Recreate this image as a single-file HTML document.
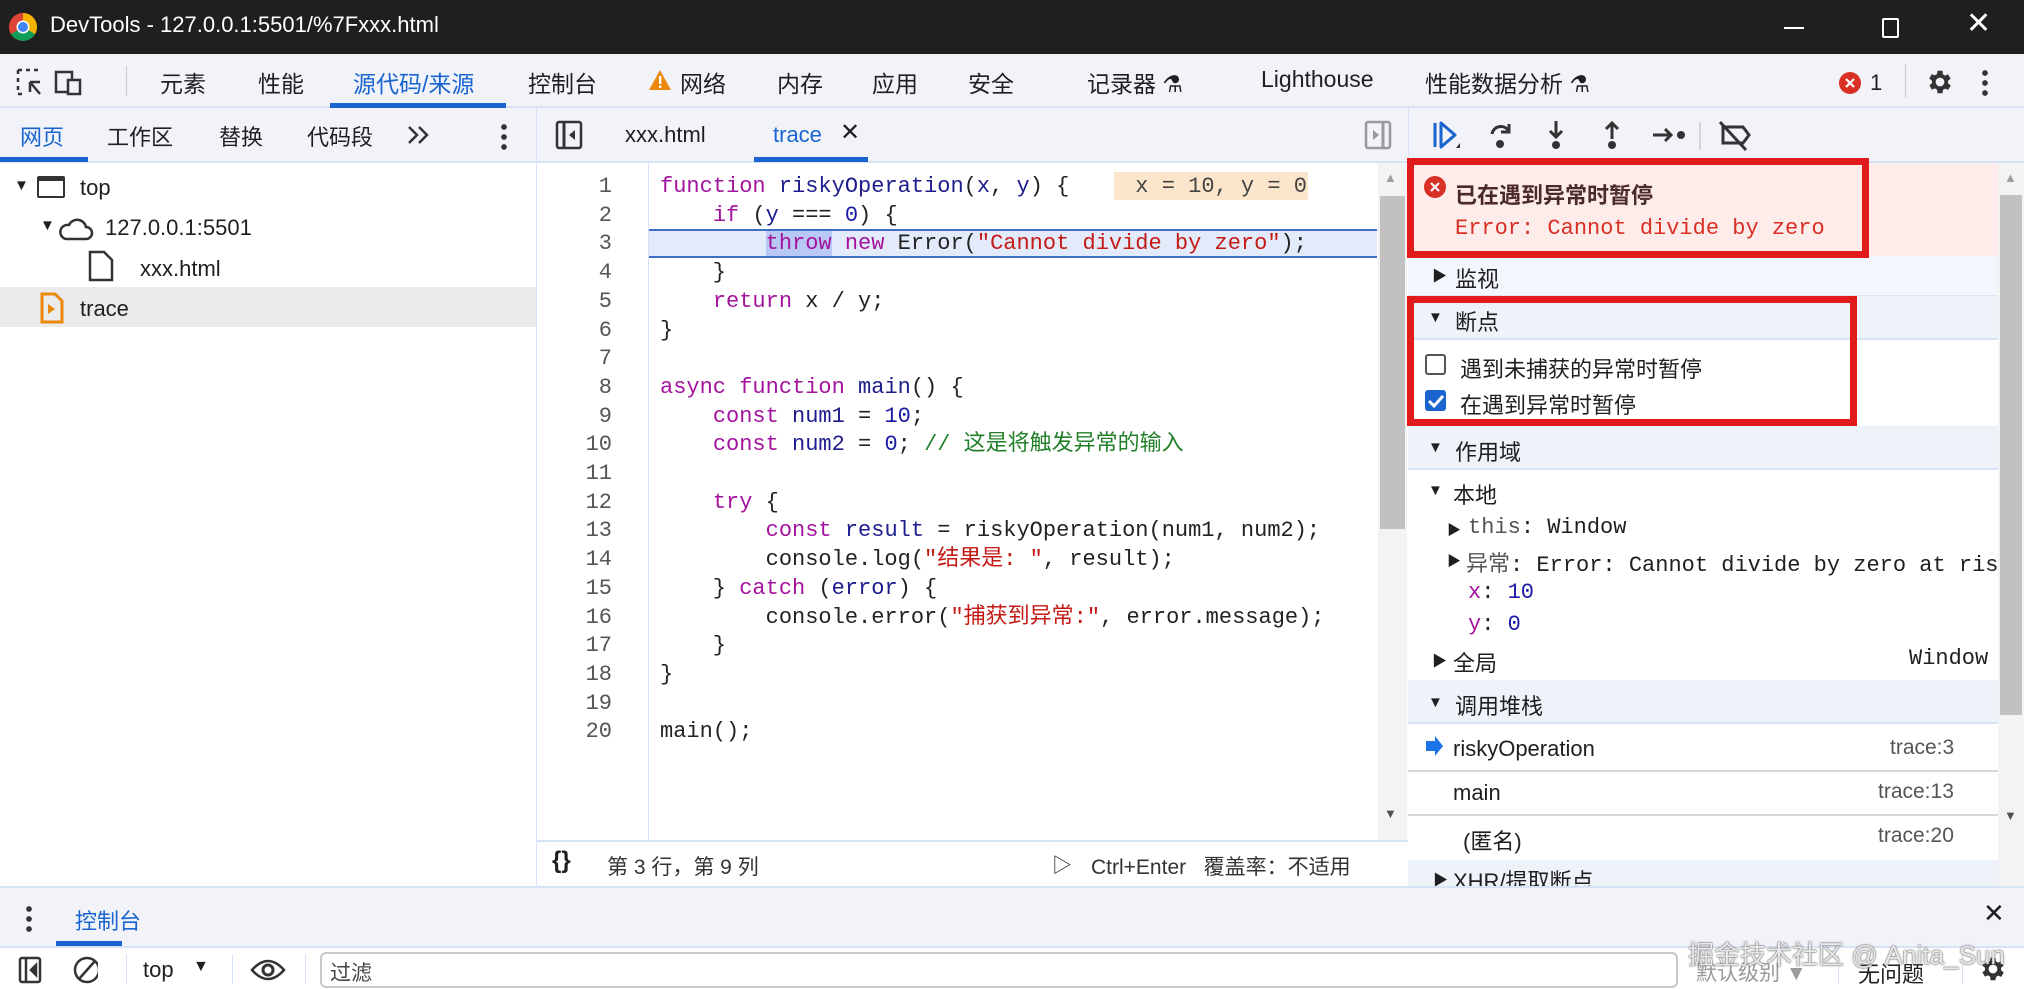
<!DOCTYPE html>
<html><head><meta charset="utf-8"><style>
*{box-sizing:border-box;margin:0;padding:0}
body{width:2024px;height:988px;overflow:hidden;background:#fff;font-family:"Liberation Sans","Noto Sans CJK SC",sans-serif;font-size:21px;color:#1f1f1f;position:relative}
.a{position:absolute;white-space:pre}
.m{font-family:"Liberation Mono","Noto Sans CJK SC",monospace;font-size:22px}
.k{color:#a3139e}.f{color:#1c1c8c}.n{color:#1a1aa6}.s{color:#c41a16}.c{color:#23802a}
</style></head><body>
<!-- title bar -->
<div class="a" style="left:0;top:0;width:2024px;height:54px;background:#1f1f1f"></div>
<svg class="a" style="left:8px;top:12px" width="30" height="30" viewBox="0 0 30 30"><circle cx="15" cy="15" r="14" fill="#db4437"/><path d="M15 15 L27.1 22 A14 14 0 0 1 3 22Z" fill="#0f9d58"/><path d="M15 15 L15 1 A14 14 0 0 1 27.1 22Z" fill="#f4b400"/><path d="M15 15 L3 22 A14 14 0 0 1 15 1Z" fill="#db4437"/><circle cx="15" cy="15" r="6.5" fill="#fff"/><circle cx="15" cy="15" r="5" fill="#4285f4"/></svg>
<div class="a" style="left:50px;top:12px;color:#fff;font-size:22px">DevTools - 127.0.0.1:5501/%7Fxxx.html</div>
<div class="a" style="left:1784px;top:27px;width:20px;height:2px;background:#fff"></div>
<div class="a" style="left:1882px;top:18px;width:17px;height:20px;border:2px solid #fff;border-radius:2px"></div>
<div class="a" style="left:1966px;top:6px;color:#fff;font-size:30px">✕</div>
<!-- main toolbar -->
<div class="a" style="left:0;top:54px;width:2024px;height:54px;background:#f1f3f9;border-bottom:2px solid #d6e2f5"></div>
<svg class="a" style="left:16px;top:68px" width="68" height="30" viewBox="0 0 68 30" fill="none" stroke="#333" stroke-width="2.5"><path d="M2 2h4M10 2h4M18 2h4M2 2v4M2 10v4M2 18v4M2 26h4M14 14l10 12" /><path d="M14 14 L14 24 M14 14 L24 14"/><rect x="40" y="4" width="16" height="20" fill="none"/><rect x="52" y="12" width="12" height="14" fill="#f1f3f9"/></svg>
<div class="a" style="left:126px;top:66px;width:1px;height:30px;background:#ccc"></div>
<div class="a" style="top:65px;left:160px;font-size:23px">元素</div>
<div class="a" style="top:65px;left:258px;font-size:23px">性能</div>
<div class="a" style="top:65px;left:353px;font-size:23px;color:#1a64d0">源代码/来源</div>
<div class="a" style="left:330px;top:103px;width:176px;height:5px;background:#1a64d0"></div>
<div class="a" style="top:65px;left:528px;font-size:23px">控制台</div>
<svg class="a" style="left:648px;top:69px" width="24" height="22"><path d="M12 1 L23 21 H1Z" fill="#e8890c"/><rect x="11" y="7" width="2.4" height="8" fill="#fff"/><rect x="11" y="16.5" width="2.4" height="2.4" fill="#fff"/></svg>
<div class="a" style="top:65px;left:680px;font-size:23px">网络</div>
<div class="a" style="top:65px;left:777px;font-size:23px">内存</div>
<div class="a" style="top:65px;left:872px;font-size:23px">应用</div>
<div class="a" style="top:65px;left:968px;font-size:23px">安全</div>
<div class="a" style="top:65px;left:1087px;font-size:23px">记录器 ⚗</div>
<div class="a" style="top:66px;left:1261px;font-size:23px">Lighthouse</div>
<div class="a" style="top:65px;left:1425px;font-size:23px">性能数据分析 ⚗</div>
<svg class="a" style="left:1839px;top:72px" width="22" height="22"><circle cx="11" cy="11" r="11" fill="#d93025"/><path d="M7 7l8 8M15 7l-8 8" stroke="#fff" stroke-width="2.2"/></svg>
<div class="a" style="top:70px;left:1870px;font-size:22px">1</div>
<div class="a" style="left:1905px;top:64px;width:1px;height:34px;background:#ccc"></div>
<svg class="a" style="left:1925px;top:67px" width="30" height="30" viewBox="0 0 24 24"><path fill="#333" d="M19.4 13a7.5 7.5 0 0 0 0-2l2.1-1.6-2-3.5-2.5 1a7 7 0 0 0-1.7-1L15 3h-4l-.4 2.7a7 7 0 0 0-1.7 1l-2.5-1-2 3.5L6.6 11a7.5 7.5 0 0 0 0 2l-2.1 1.6 2 3.5 2.5-1a7 7 0 0 0 1.7 1L11 21h4l.4-2.7a7 7 0 0 0 1.7-1l2.5 1 2-3.5zM13 15.5A3.5 3.5 0 1 1 13 8.5a3.5 3.5 0 0 1 0 7z" transform="translate(-1 0)"/></svg>
<div class="a" style="left:1982px;top:68px;width:6px;height:28px;background:radial-gradient(circle,#333 2.6px,transparent 3px) 0 0/6px 10px"></div>
<!-- left panel -->
<div class="a" style="left:0;top:108px;width:536px;height:55px;background:#f1f3f9;border-bottom:2px solid #d6e2f5"></div>
<div class="a" style="left:536px;top:108px;width:1px;height:778px;background:#d6e2f5"></div>
<div class="a" style="top:120px;left:20px;color:#1a64d0;font-size:22px">网页</div>
<div class="a" style="left:0;top:157px;width:88px;height:5px;background:#1a64d0"></div>
<div class="a" style="top:120px;left:107px;font-size:22px">工作区</div>
<div class="a" style="top:120px;left:219px;font-size:22px">替换</div>
<div class="a" style="top:120px;left:307px;font-size:22px">代码段</div>
<svg class="a" style="left:406px;top:124px" width="26" height="22" fill="none" stroke="#333" stroke-width="2.5"><path d="M3 3l8 8-8 8M13 3l8 8-8 8"/></svg>
<div class="a" style="left:501px;top:122px;width:6px;height:28px;background:radial-gradient(circle,#333 2.6px,transparent 3px) 0 0/6px 10px"></div>
<div class="a" style="top:177px;left:14px;font-size:15px">▼</div>
<div class="a" style="left:37px;top:176px;width:28px;height:22px;border:2.5px solid #333;border-top-width:5px;border-radius:2px"></div>
<div class="a" style="top:175px;left:80px;font-size:22px">top</div>
<div class="a" style="top:217px;left:40px;font-size:15px">▼</div>
<svg class="a" style="left:58px;top:215px" width="36" height="26"><path d="M8 24h20a6 6 0 0 0 0-12 9 9 0 0 0-17-2 7 7 0 0 0-3 14z" fill="none" stroke="#333" stroke-width="2.5"/></svg>
<div class="a" style="top:215px;left:105px;font-size:22px">127.0.0.1:5501</div>
<svg class="a" style="left:88px;top:250px" width="26" height="32"><path d="M2 2h14l8 8v20H2z" fill="none" stroke="#333" stroke-width="2.5"/></svg>
<div class="a" style="top:256px;left:140px;font-size:22px">xxx.html</div>
<div class="a" style="left:0;top:287px;width:536px;height:40px;background:#ebebeb"></div>
<svg class="a" style="left:40px;top:292px" width="24" height="32"><path d="M2 2h13l7 7v21H2z" fill="none" stroke="#e8890c" stroke-width="3"/><path d="M8 12l7 5-7 5z" fill="#e8890c"/></svg>
<div class="a" style="top:296px;left:80px;font-size:22px">trace</div>
<!-- editor tabs -->
<div class="a" style="left:537px;top:108px;width:871px;height:55px;background:#f1f3f9;border-bottom:2px solid #d6e2f5"></div>
<svg class="a" style="left:555px;top:120px" width="30" height="32"><rect x="2" y="2" width="24" height="26" rx="2" fill="none" stroke="#333" stroke-width="2.5"/><path d="M9 2v26" stroke="#333" stroke-width="3"/><path d="M20 10l-6 5 6 5z" fill="#333"/></svg>
<div class="a" style="top:122px;left:625px;font-size:22px">xxx.html</div>
<div class="a" style="top:122px;left:773px;font-size:22px;color:#1a64d0">trace</div>
<div class="a" style="top:118px;left:840px;font-size:24px">✕</div>
<div class="a" style="left:754px;top:157px;width:114px;height:5px;background:#1a64d0"></div>
<svg class="a" style="left:1364px;top:120px" width="30" height="32"><rect x="2" y="2" width="24" height="26" rx="2" fill="none" stroke="#999" stroke-width="2.5"/><path d="M19 2v26" stroke="#999" stroke-width="3"/><path d="M9 10l6 5-6 5z" fill="#999"/></svg>
<!-- code -->
<div class="a" style="left:648px;top:163px;width:1px;height:679px;background:#d6e2f5"></div>
<div class="a" style="left:649px;top:229px;width:728px;height:29px;background:#e3ebfb;border-top:2px solid #3d6fc7;border-bottom:2px solid #3d6fc7"></div>
<div class="a" style="left:766px;top:231px;width:66px;height:25px;background:#b9c8f5"></div>
<div class="a m" style="left:1114px;top:172px;width:194px;height:28px;background:#fbe6cc"></div>
<div class="a m" style="left:560px;top:173px;line-height:28.7px;text-align:right;width:52px;color:#555">1
2
3
4
5
6
7
8
9
10
11
12
13
14
15
16
17
18
19
20</div>
<div class="a m" style="left:660px;top:173px;line-height:28.7px;color:#222"><span class="k">function</span> <span class="f">riskyOperation</span>(<span class="f">x</span>, <span class="f">y</span>) {    <span style="color:#444"> x = 10, y = 0</span>
    <span class="k">if</span> (<span class="f">y</span> === <span class="n">0</span>) {
        <span class="k">throw</span> <span class="k">new</span> Error(<span class="s">"Cannot divide by zero"</span>);
    }
    <span class="k">return</span> x / y;
}

<span class="k">async</span> <span class="k">function</span> <span class="f">main</span>() {
    <span class="k">const</span> <span class="f">num1</span> = <span class="n">10</span>;
    <span class="k">const</span> <span class="f">num2</span> = <span class="n">0</span>; <span class="c">// 这是将触发异常的输入</span>

    <span class="k">try</span> {
        <span class="k">const</span> <span class="f">result</span> = riskyOperation(num1, num2);
        console.log(<span class="s">"结果是: "</span>, result);
    } <span class="k">catch</span> (<span class="f">error</span>) {
        console.error(<span class="s">"捕获到异常:"</span>, error.message);
    }
}

main();</div>
<div class="a" style="left:1378px;top:163px;width:29px;height:679px;background:#f3f3f3"></div>
<div class="a" style="left:1380px;top:196px;width:25px;height:333px;background:#c1c1c1"></div>
<div class="a" style="top:170px;left:1384px;font-size:13px;color:#a0a0a0">▲</div>
<div class="a" style="top:806px;left:1384px;font-size:13px;color:#505050">▼</div>
<!-- status bar -->
<div class="a" style="left:537px;top:840px;width:871px;height:46px;border-top:2px solid #d6e2f5;background:#fff"></div>
<div class="a" style="top:847px;left:552px;font-size:24px;font-weight:bold">{}</div>
<div class="a" style="top:851px;left:607px;font-size:21px;color:#333">第 3 行，第 9 列</div>
<div class="a" style="top:849px;left:1052px;font-size:20px">▷</div>
<div class="a" style="top:851px;left:1091px;font-size:21px;color:#333">Ctrl+Enter   覆盖率：不适用</div>
<!-- right panel -->
<div class="a" style="left:1408px;top:108px;width:616px;height:55px;background:#f1f3f9;border-bottom:2px solid #d6e2f5;border-left:1px solid #d6e2f5"></div>
<svg class="a" style="left:1430px;top:118px" width="340" height="36" fill="none" stroke="#333" stroke-width="3">
<path d="M5 5v24" stroke="#1a64d0"/><path d="M11 5 L25 17 L11 29Z" stroke="#1a64d0" stroke-linejoin="round"/><path d="M26 30l4-5v5z" fill="#333" stroke="none"/>
<path d="M62 16a9 9 0 0 1 16-4" /><path d="M79 6v8h-8" stroke-width="3"/><circle cx="70" cy="26" r="4" fill="#333" stroke="none"/>
<path d="M126 3v16M120 13l6 6 6-6"/><circle cx="126" cy="27" r="4" fill="#333" stroke="none"/>
<path d="M182 21V5M176 11l6-6 6 6"/><circle cx="182" cy="27" r="4" fill="#333" stroke="none"/>
<path d="M223 17h18M235 11l6 6-6 6"/><circle cx="251" cy="17" r="4" fill="#333" stroke="none"/>
<path d="M270 4v28" stroke="#ccc" stroke-width="1.5"/>
<path d="M293 9h20l6 8-6 8h-20z"/><path d="M290 4l26 28"/>
</svg>
<div class="a" style="left:1408px;top:163px;width:590px;height:93px;background:#fdecea"></div>
<div class="a" style="left:1408px;top:256px;width:590px;height:40px;background:#f3f6fc;border-bottom:1px solid #dde5f3"></div>
<div class="a" style="left:1408px;top:296px;width:590px;height:44px;background:#eef2f9;border-bottom:2px solid #d6e2f5"></div>
<div class="a" style="left:1408px;top:426px;width:590px;height:44px;background:#eef2f9;border-bottom:2px solid #d6e2f5"></div>
<div class="a" style="left:1408px;top:680px;width:590px;height:44px;background:#eef2f9;border-bottom:2px solid #d6e2f5"></div>
<div class="a" style="left:1408px;top:860px;width:590px;height:26px;background:#eef2f9"></div>
<div class="a" style="left:1408px;top:770px;width:590px;height:2px;background:#d8d8d8"></div>
<div class="a" style="left:1408px;top:814px;width:590px;height:2px;background:#d8d8d8"></div>
<svg class="a" style="left:1424px;top:176px" width="22" height="22"><circle cx="11" cy="11" r="11" fill="#d93025"/><path d="M7 7l8 8M15 7l-8 8" stroke="#fff" stroke-width="2.2"/></svg>
<div class="a" style="top:178px;left:1455px;font-size:22px;font-weight:bold;color:#4a2a2a">已在遇到异常时暂停</div>
<div class="a m" style="top:216px;left:1455px;color:#d93025">Error: Cannot divide by zero</div>
<div class="a" style="top:265px;left:1432px;font-size:15px">▶</div><div class="a" style="top:262px;left:1455px;font-size:22px">监视</div>
<div class="a" style="top:309px;left:1428px;font-size:15px">▼</div><div class="a" style="top:305px;left:1455px;font-size:22px">断点</div>
<div class="a" style="left:1425px;top:354px;width:21px;height:21px;border:2px solid #555;border-radius:3px"></div>
<div class="a" style="top:352px;left:1460px;font-size:22px">遇到未捕获的异常时暂停</div>
<div class="a" style="left:1425px;top:390px;width:21px;height:21px;background:#1a64d0;border-radius:3px"></div>
<svg class="a" style="left:1425px;top:390px" width="21" height="21"><path d="M4 11l5 5 9-10" stroke="#fff" stroke-width="3" fill="none"/></svg>
<div class="a" style="top:388px;left:1460px;font-size:22px">在遇到异常时暂停</div>
<div class="a" style="top:439px;left:1428px;font-size:15px">▼</div><div class="a" style="top:435px;left:1455px;font-size:22px">作用域</div>
<div class="a" style="top:482px;left:1428px;font-size:15px">▼</div><div class="a" style="top:478px;left:1453px;font-size:22px">本地</div>
<div class="a" style="top:520px;left:1447px;font-size:14px">▶</div><div class="a m" style="top:515px;left:1468px"><span style="color:#555">this</span>: Window</div>
<div class="a" style="top:551px;left:1447px;font-size:14px">▶</div><div class="a m" style="top:546px;left:1466px;width:532px;overflow:hidden"><span style="color:#555">异常</span>: Error: Cannot divide by zero at ris</div>
<div class="a m" style="top:580px;left:1468px"><span class="k">x</span>: <span class="n">10</span></div>
<div class="a m" style="top:612px;left:1468px"><span class="k">y</span>: <span class="n">0</span></div>
<div class="a" style="top:650px;left:1432px;font-size:15px">▶</div><div class="a" style="top:646px;left:1453px;font-size:22px">全局</div>
<div class="a m" style="top:646px;left:1909px">Window</div>
<div class="a" style="top:694px;left:1428px;font-size:15px">▼</div><div class="a" style="top:689px;left:1455px;font-size:22px">调用堆栈</div>
<svg class="a" style="left:1424px;top:735px" width="20" height="22"><path d="M2 6h9V1l8 10-8 10v-5H2z" fill="#1a73e8"/></svg>
<div class="a" style="top:736px;left:1453px;font-size:22px">riskyOperation</div><div class="a" style="top:736px;left:1890px;font-size:21px;color:#555">trace:3</div>
<div class="a" style="top:780px;left:1453px;font-size:22px">main</div><div class="a" style="top:780px;left:1878px;font-size:21px;color:#555">trace:13</div>
<div class="a" style="top:824px;left:1463px;font-size:22px">(匿名)</div><div class="a" style="top:824px;left:1878px;font-size:21px;color:#555">trace:20</div>
<div class="a" style="top:869px;left:1433px;font-size:15px">▶</div><div class="a" style="top:864px;left:1453px;font-size:22px">XHR/提取断点</div>
<div class="a" style="left:1998px;top:163px;width:26px;height:723px;background:#f3f3f3"></div>
<div class="a" style="left:2000px;top:195px;width:22px;height:520px;background:#c1c1c1"></div>
<div class="a" style="top:170px;left:2004px;font-size:13px;color:#a0a0a0">▲</div>
<div class="a" style="top:808px;left:2004px;font-size:13px;color:#505050">▼</div>
<!-- red boxes -->
<div class="a" style="left:1407px;top:158px;width:462px;height:100px;border:7px solid #e11b1b"></div>
<div class="a" style="left:1407px;top:296px;width:450px;height:130px;border:7px solid #e11b1b"></div>
<!-- drawer -->
<div class="a" style="left:0;top:886px;width:2024px;height:62px;background:#f1f3f9;border-top:2px solid #d6e2f5;border-bottom:2px solid #d6e2f5"></div>
<div class="a" style="left:26px;top:904px;width:6px;height:28px;background:radial-gradient(circle,#333 2.6px,transparent 3px) 0 0/6px 10px"></div>
<div class="a" style="top:904px;left:75px;font-size:22px;color:#1a64d0">控制台</div>
<div class="a" style="left:56px;top:941px;width:66px;height:5px;background:#1a64d0"></div>
<div class="a" style="top:898px;left:1983px;font-size:26px">✕</div>
<svg class="a" style="left:18px;top:955px" width="80" height="30" fill="none" stroke="#333" stroke-width="2.5"><rect x="2" y="3" width="20" height="24" rx="2"/><path d="M8 3v24"/><path d="M18 10l-5 5 5 5z" fill="#333"/><circle cx="69" cy="15" r="12"/><path d="M61 24l16-18"/></svg>
<div class="a" style="left:126px;top:954px;width:1px;height:30px;background:#d6e2f5"></div>
<div class="a" style="top:957px;left:143px;font-size:22px">top</div><div class="a" style="top:958px;left:193px;font-size:16px">▼</div>
<div class="a" style="left:232px;top:954px;width:1px;height:30px;background:#d6e2f5"></div>
<svg class="a" style="left:250px;top:955px" width="36" height="30"><path d="M2 15q16-18 32 0q-16 18-32 0z" fill="none" stroke="#333" stroke-width="2.5"/><circle cx="18" cy="15" r="5" fill="none" stroke="#333" stroke-width="3"/></svg>
<div class="a" style="left:305px;top:954px;width:1px;height:30px;background:#d6e2f5"></div>
<div class="a" style="left:320px;top:952px;width:1358px;height:36px;border:2px solid #c8c8c8;border-radius:6px"></div>
<div class="a" style="top:957px;left:330px;font-size:21px;color:#444">过滤</div>
<div class="a" style="top:957px;left:1696px;font-size:21px;color:#9a9a9a">默认级别 ▼</div>
<div class="a" style="left:1838px;top:954px;width:1px;height:30px;background:#d6e2f5"></div>
<div class="a" style="top:957px;left:1858px;font-size:22px">无问题</div>
<div class="a" style="left:1962px;top:954px;width:1px;height:30px;background:#d6e2f5"></div>
<svg class="a" style="left:1978px;top:954px" width="30" height="30" viewBox="0 0 24 24"><path fill="#333" d="M19.4 13a7.5 7.5 0 0 0 0-2l2.1-1.6-2-3.5-2.5 1a7 7 0 0 0-1.7-1L15 3h-4l-.4 2.7a7 7 0 0 0-1.7 1l-2.5-1-2 3.5L6.6 11a7.5 7.5 0 0 0 0 2l-2.1 1.6 2 3.5 2.5-1a7 7 0 0 0 1.7 1L11 21h4l.4-2.7a7 7 0 0 0 1.7-1l2.5 1 2-3.5zM13 15.5A3.5 3.5 0 1 1 13 8.5a3.5 3.5 0 0 1 0 7z" transform="translate(-1 0)"/></svg>
<div class="a" style="top:935px;left:1688px;font-size:26px;color:rgba(255,255,255,0.85);text-shadow:0 0 2px #666,0 0 1px #444">掘金技术社区 @ Anita_Sun</div>
</body></html>
